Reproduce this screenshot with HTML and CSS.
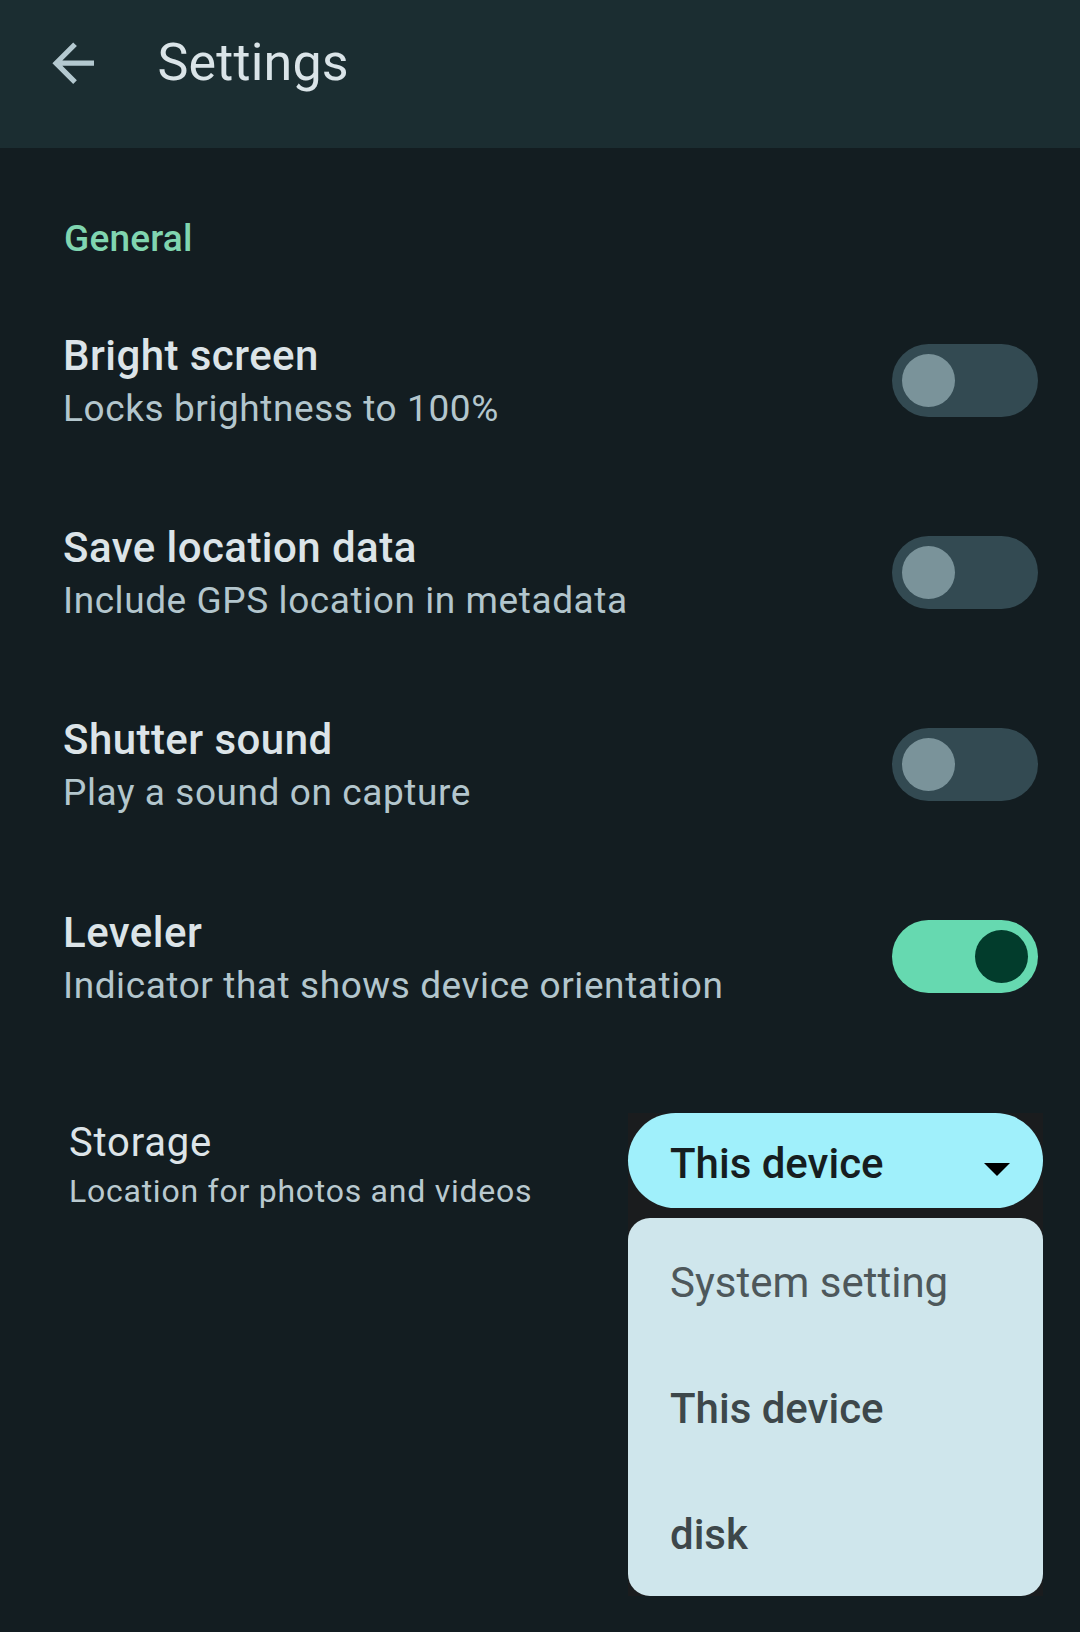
FILE: index.html
```html
<!DOCTYPE html>
<html lang="en">
<head>
<meta charset="utf-8">
<title>Settings</title>
<link rel="stylesheet" href="styles.css">
</head>
<body>
<header class="topbar">
  <div class="topbar-row">
    <svg class="back-icon" viewBox="0 0 24 24" aria-hidden="true">
      <path d="M20 11H7.83l5.59-5.59L12 4l-8 8 8 8 1.41-1.41L7.83 13H20v-2z"/>
    </svg>
    <h1 class="topbar-title">Settings</h1>
  </div>
</header>
<main class="content">
  <h2 class="section-title">General</h2>

  <div class="setting-row">
    <div class="setting-text">
      <div class="setting-title">Bright screen</div>
      <div class="setting-sub">Locks brightness to 100%</div>
    </div>
    <div class="switch"><span class="thumb"></span></div>
  </div>

  <div class="setting-row">
    <div class="setting-text">
      <div class="setting-title">Save location data</div>
      <div class="setting-sub">Include GPS location in metadata</div>
    </div>
    <div class="switch"><span class="thumb"></span></div>
  </div>

  <div class="setting-row">
    <div class="setting-text">
      <div class="setting-title">Shutter sound</div>
      <div class="setting-sub">Play a sound on capture</div>
    </div>
    <div class="switch"><span class="thumb"></span></div>
  </div>

  <div class="setting-row">
    <div class="setting-text">
      <div class="setting-title">Leveler</div>
      <div class="setting-sub">Indicator that shows device orientation</div>
    </div>
    <div class="switch switch-on"><span class="thumb"></span></div>
  </div>

  <div class="storage-row">
    <div class="storage-text">
      <div class="storage-title">Storage</div>
      <div class="storage-sub">Location for photos and videos</div>
    </div>
    <div class="dropdown">
      <div class="dropdown-button">
        <span class="dropdown-value">This device</span>
        <svg class="dropdown-arrow" viewBox="0 0 26 13" aria-hidden="true">
          <polygon points="0,0 26,0 13,13"/>
        </svg>
      </div>
      <ul class="dropdown-menu">
        <li class="menu-item menu-item-muted">System setting</li>
        <li class="menu-item">This device</li>
        <li class="menu-item">disk</li>
      </ul>
    </div>
  </div>
</main>
</body>
</html>
```

FILE: styles.css
```css
html, body {
  margin: 0;
  padding: 0;
}

body {
  width: 1080px;
  min-height: 1632px;
  background: #131d21;
  font-family: Roboto, "Noto Sans", "Liberation Sans", sans-serif;
  color: #dce4e8;
}

.topbar {
  background: #1b2d31;
  height: 148px;
  box-sizing: border-box;
  padding-bottom: 22px;
}

.topbar-row {
  height: 126px;
  display: flex;
  align-items: center;
  padding-left: 42px;
}

.back-icon {
  width: 62.4px;
  height: 62.4px;
  fill: #b4c9d0;
  flex: none;
}

.topbar-title {
  margin: 0 0 0 53px;
  font-size: 52px;
  font-weight: 400;
  line-height: 64px;
  color: #dae4e8;
  letter-spacing: 0.2px;
}

.content {
  padding-top: 67px;
}

.section-title {
  margin: 0 0 21px 0;
  padding-left: 64px;
  font-size: 37px;
  line-height: 48px;
  font-weight: 500;
  color: #80d5b0;
  letter-spacing: 0.2px;
}

.setting-row {
  display: flex;
  align-items: center;
  justify-content: space-between;
  padding: 43.1px 42px 43.1px 63px;
}

.setting-title {
  font-size: 42px;
  line-height: 58px;
  font-weight: 500;
  color: #dce4e8;
  letter-spacing: 0.45px;
}

.setting-sub {
  font-size: 37px;
  line-height: 48px;
  color: #b3c6cd;
  letter-spacing: 0.58px;
}

.switch {
  width: 146px;
  height: 73px;
  box-sizing: border-box;
  border-radius: 37px;
  background: #334a52;
  display: flex;
  align-items: center;
  padding: 0 10px;
  flex: none;
}

.thumb {
  width: 53px;
  height: 53px;
  border-radius: 50%;
  background: #7a939a;
}

.switch-on {
  background: #66d9b0;
  justify-content: flex-end;
}

.switch-on .thumb {
  background: #023c2c;
}

.storage-row {
  display: flex;
  justify-content: space-between;
  align-items: flex-start;
  padding: 60.2px 37px 0 69px;
}

.storage-text {
  margin-top: 4.5px;
}

.storage-title {
  font-size: 40px;
  line-height: 52px;
  color: #dde4e8;
  letter-spacing: 0.8px;
}

.storage-sub {
  font-size: 32px;
  line-height: 44px;
  color: #b9c9cf;
  letter-spacing: 0.75px;
}

.dropdown {
  width: 415px;
  background: #1a1c1e;
  display: flex;
  flex-direction: column;
  gap: 10px;
}

.dropdown-button {
  height: 95px;
  box-sizing: border-box;
  border-radius: 47.5px;
  background: #a0f0fb;
  display: flex;
  align-items: center;
  justify-content: space-between;
  padding: 8px 33px 0 42px;
}

.dropdown-value {
  font-size: 42px;
  line-height: 56px;
  font-weight: 500;
  color: #161d20;
}

.dropdown-arrow {
  width: 26px;
  height: 13px;
  fill: #000000;
  margin-top: 10px;
}

.dropdown-menu {
  list-style: none;
  margin: 0;
  padding: 0;
  background: #cfe6ec;
  border-radius: 22px;
}

.menu-item {
  height: 126px;
  box-sizing: border-box;
  display: flex;
  align-items: center;
  padding: 4px 0 0 42px;
  font-size: 42px;
  line-height: 56px;
  font-weight: 500;
  color: #3d474a;
}

.menu-item-muted {
  font-weight: 400;
  color: #4e585b;
}
```
